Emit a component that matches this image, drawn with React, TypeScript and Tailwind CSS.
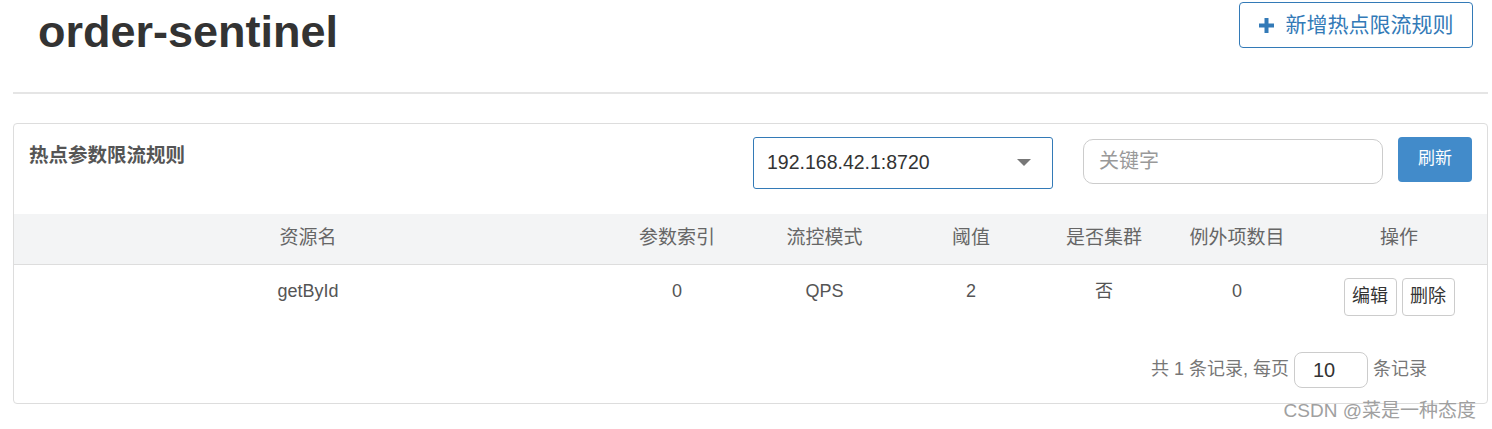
import React from "react";

const font = "font-['Liberation_Sans','Noto_Sans_CJK_SC',sans-serif]";

const columns = [
  { key: "resource", label: "资源名", width: "w-[588px]" },
  { key: "paramIdx", label: "参数索引", width: "w-[150px]" },
  { key: "mode", label: "流控模式", width: "w-[145px]" },
  { key: "count", label: "阈值", width: "w-[148px]" },
  { key: "cluster", label: "是否集群", width: "w-[118px]" },
  { key: "items", label: "例外项数目", width: "w-[148px]" },
  { key: "actions", label: "操作", width: "flex-1" },
];

const rows = [
  { resource: "getById", paramIdx: "0", mode: "QPS", count: "2", cluster: "否", items: "0" },
];

const App: React.FC = () => {
  return (
    <div className={`${font} min-h-[429px] bg-white pl-[13px] pr-[4px] text-[#555] relative`}>
      {/* page header */}
      <div className="flex items-start justify-between pt-[2px] pb-[35px] border-b-2 border-[#e5e5e5]">
        <h1 className="pl-[25px] pt-[5px] text-[45px] leading-[1.1] font-bold text-[#333]">
          order-sentinel
        </h1>
        <button className="mr-[15px] flex h-[46px] w-[234px] items-center justify-center gap-[12px] rounded-[4px] border border-[#337ab7] text-[21px] text-[#337ab7]">
          <svg width="15" height="15" viewBox="0 0 15 15">
            <path d="M5.5 0h4v5.5H15v4H9.5V15h-4V9.5H0v-4h5.5z" fill="#337ab7" />
          </svg>
          新增热点限流规则
        </button>
      </div>

      {/* panel */}
      <div className="mt-[29px] rounded-[4px] border border-[#ddd]">
        <div className="flex items-start pl-[15px] pr-[15px] pt-[13px] h-[90px]">
          <div className="pt-[4px] text-[19.5px] font-bold text-[#555] flex-1">热点参数限流规则</div>
          <div className="flex h-[52px] w-[300px] items-center justify-between rounded-[3px] border border-[#337ab7] pl-[13px] pr-[21px] text-[19.5px] text-[#333]">
            <span>192.168.42.1:8720</span>
            <svg width="14" height="8" viewBox="0 0 14 8">
              <path d="M0 0h14L7 7z" fill="#777" />
            </svg>
          </div>
          <div className="ml-[30px] mt-[2px] flex h-[45px] w-[300px] items-center rounded-[10px] border border-[#ccc] px-[15px] text-[20px] text-[#999]">
            关键字
          </div>
          <button className="ml-[15px] h-[45px] w-[74px] rounded-[4px] bg-[#428bca] text-[17px] text-white">
            刷新
          </button>
        </div>

        <div className="flex h-[51px] items-center border-b border-[#ddd] bg-[#f3f4f5] text-[19px] text-[#666]">
          {columns.map((c) => (
            <div key={c.key} className={`${c.width} text-center`}>
              {c.label}
            </div>
          ))}
        </div>

        {rows.map((r, i) => (
          <div key={i} className="flex items-start pt-[13px] pb-[8px] text-[18px] text-[#555]">
            <div className="w-[588px] text-center leading-[26px]">{r.resource}</div>
            <div className="w-[150px] text-center leading-[26px]">{r.paramIdx}</div>
            <div className="w-[145px] text-center leading-[26px]">{r.mode}</div>
            <div className="w-[148px] text-center leading-[26px]">{r.count}</div>
            <div className="w-[118px] text-center leading-[26px]">{r.cluster}</div>
            <div className="w-[148px] text-center leading-[26px]">{r.items}</div>
            <div className="flex flex-1 justify-center gap-[5px]">
              <button className="h-[38px] w-[53px] rounded-[4px] border border-[#ccc] text-[18px] text-[#333]">编辑</button>
              <button className="h-[38px] w-[53px] rounded-[4px] border border-[#ccc] text-[18px] text-[#333]">删除</button>
            </div>
          </div>
        ))}

        <div className="flex items-center justify-end pt-[28px] pb-[15px] pr-[60px] text-[18px] text-[#777]">
          <span>共 1 条记录, 每页</span>
          <div className="mx-[5px] flex h-[36px] w-[74px] items-center rounded-[8px] border border-[#ccc] pl-[18px] text-[20px] text-[#333]">
            10
          </div>
          <span>条记录</span>
        </div>
      </div>

      <div className="absolute right-[16px] top-[397px] text-[19px] text-[#a0a0a0]">CSDN @菜是一种态度</div>
    </div>
  );
};

export default App;
